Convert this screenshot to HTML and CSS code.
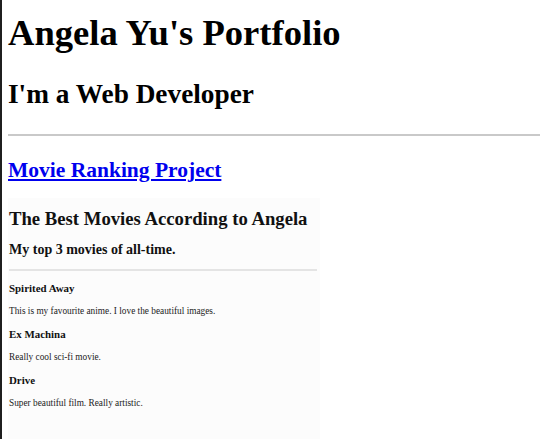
FILE: index.html
```html
<!DOCTYPE html>
<html lang="en">
<head>
<meta charset="utf-8">
<title>Angela Yu's Portfolio</title>
<link rel="stylesheet" href="styles.css">
</head>
<body>
<div class="page">
  <h1 class="title">Angela Yu's Portfolio</h1>
  <h2 class="subtitle">I'm a Web Developer</h2>
  <hr class="rule">
  <h3 class="project"><a href="#" class="project-link">Movie Ranking Project</a></h3>
  <div class="shot">
    <h1 class="shot-title">The Best Movies According to Angela</h1>
    <h2 class="shot-sub">My top 3 movies of all-time.</h2>
    <hr class="shot-rule">
    <h3 class="movie">Spirited Away</h3>
    <p class="desc">This is my favourite anime. I love the beautiful images.</p>
    <h3 class="movie">Ex Machina</h3>
    <p class="desc">Really cool sci-fi movie.</p>
    <h3 class="movie">Drive</h3>
    <p class="desc">Super beautiful film. Really artistic.</p>
  </div>
</div>
</body>
</html>
```
FILE: styles.css
```css
html, body {
  margin: 0;
  padding: 0;
  background: #ffffff;
}

body {
  font-family: "Liberation Serif", "Times New Roman", serif;
  color: #000;
}

.page {
  border-left: 2px solid #1f1f1f;
  padding: 12px 0 0 6px;
  min-height: 439px;
  box-sizing: border-box;
  overflow: hidden;
}

.title {
  font-size: 36.6px;
  line-height: 42px;
  font-weight: bold;
  margin: 0;
}

.subtitle {
  font-size: 27.3px;
  line-height: 32px;
  font-weight: bold;
  margin: 24px 0 0;
}

.rule {
  border: 0;
  border-top: 2px solid #c9c9c9;
  height: 0;
  margin: 24px 0 0;
}

.project {
  font-size: 21.5px;
  line-height: 25px;
  font-weight: bold;
  margin: 22px 0 0;
}

.project-link {
  color: #0000ee;
  text-decoration: underline;
}

.shot {
  width: 308px;
  margin-top: 15px;
  padding: 10px 3px 40px 1px;
  background: #fcfcfc;
}

.shot-title {
  font-size: 18.7px;
  line-height: 22px;
  font-weight: bold;
  margin: 0;
  color: #111;
}

.shot-sub {
  font-size: 14px;
  line-height: 17px;
  font-weight: bold;
  margin: 11px 0 0;
  color: #111;
}

.shot-rule {
  border: 0;
  border-top: 2px solid #e4e4e4;
  height: 0;
  margin: 11px 0 0;
}

.movie {
  font-size: 10.9px;
  line-height: 13px;
  font-weight: bold;
  margin: 11px 0;
  color: #111;
}

.desc {
  font-size: 9.3px;
  line-height: 11px;
  margin: 11px 0;
  color: #222;
}
```
